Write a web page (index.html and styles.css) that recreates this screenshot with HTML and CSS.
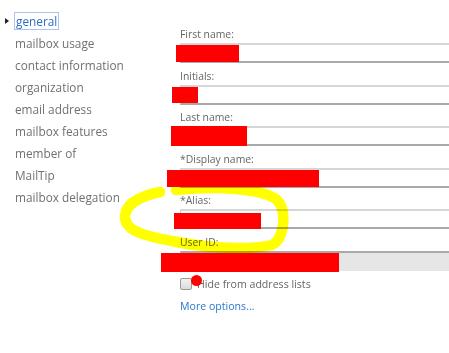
FILE: index.html
```html
<!DOCTYPE html>
<html lang="en">
<head>
  <meta charset="UTF-8" />
  <title>Mailbox - general</title>
  <link rel="stylesheet" href="styles.css">
</head>
<body>
  <div class="page">
    <ul class="nav">
      <li class="current"><span class="arrow"></span><span class="sel">general</span></li>
      <li>mailbox usage</li>
      <li>contact information</li>
      <li>organization</li>
      <li>email address</li>
      <li>mailbox features</li>
      <li>member of</li>
      <li>MailTip</li>
      <li>mailbox delegation</li>
    </ul>

    <div class="form">
      <div class="field">
        <label>First name:</label>
        <div class="box"><span class="redact r1"></span></div>
      </div>
      <div class="field">
        <label>Initials:</label>
        <div class="box"><span class="redact r2"></span></div>
      </div>
      <div class="field">
        <label>Last name:</label>
        <div class="box"><span class="redact r3"></span></div>
      </div>
      <div class="field">
        <label>*Display name:</label>
        <div class="box"><span class="redact r4"></span></div>
      </div>
      <div class="field">
        <label>*Alias:</label>
        <div class="box"><span class="redact r5"></span></div>
      </div>
      <div class="field">
        <label>User ID:</label>
        <div class="box disabled"><span class="redact r6"></span></div>
      </div>

      <div class="check">
        <span class="checkbox"></span>
        <span class="dot"></span>
        <span>Hide from address lists</span>
      </div>
      <a class="more" href="#">More options...</a>
    </div>
  </div>

  <!-- highlighter scribble round the alias field -->
  <svg class="scribble" width="449" height="353" viewBox="0 0 449 353">
    <path d="M176 190 C215 186 263 188 277 200 C287 210 285 238 272 245 C245 251 200 247 172 241 C145 236 124 231 125 216 C126 204 140 196 160 192"
          fill="none" stroke="#ffff00" stroke-width="10.5" stroke-linecap="round" stroke-linejoin="round" />
  </svg>
</body>
</html>
```

FILE: styles.css
```css
body { margin: 0; font-family: "Open Sans", "Noto Sans", sans-serif; background: #fff; overflow: hidden; }
.page { display: flex; }

.nav { list-style: none; margin: 0; padding: 10px 0 0 0; width: 180px; flex: none; }
.nav li { height: 22px; line-height: 22px; font-size: 11.8px; color: #707070; padding-left: 15px; position: relative; white-space: nowrap; }
.nav .current .sel { color: #2f6fbf; border: 1px solid #a9c6ec; padding: 0 1px; margin-left: -1px; line-height: 16px; display: inline-block; }
.nav .arrow { position: absolute; left: 5px; top: 8px; width: 0; height: 0; border-left: 4px solid #222; border-top: 3px solid transparent; border-bottom: 3px solid transparent; }

.form { flex: 1; min-width: 0; padding-top: 27px; }
.field { margin-bottom: 5.6px; }
.field label { display: block; font-size: 10.4px; line-height: 15px; color: #666; margin-bottom: 1px; }
.box { position: relative; height: 16px; border-top: 2px solid #d6d6d6; border-left: 1px solid #d0d0d0; border-bottom: 2px solid #a9a9a9; background: #fff; }
.box.disabled { background: #e6e6e6; border-top-color: #a9a9a9; border-bottom-color: #e6e6e6; }

.redact { position: absolute; background: #ff0000; }
.r1 { left: -5px; top: 0; width: 63px; height: 17px; }
.r2 { left: -9px; top: 0; width: 26px; height: 16px; }
.r3 { left: -10px; top: -2px; width: 76px; height: 20px; }
.r4 { left: -14px; top: 0; width: 152px; height: 17px; }
.r5 { left: -7px; top: 2px; width: 87px; height: 16px; }
.r6 { left: -20px; top: 0; width: 178px; height: 19px; }

.check { display: flex; align-items: center; height: 14px; margin-top: 6px; font-size: 10.6px; color: #666; position: relative; }
.checkbox { width: 10px; height: 10px; border: 1px solid #9a9a9a; border-radius: 2px; background: linear-gradient(#f2f2f2, #dcdcdc); margin-right: 5px; }
.dot { position: absolute; left: 11px; top: -2px; width: 11px; height: 11px; border-radius: 50%; background: #ff0000; }
.more { display: block; margin-top: 8px; font-size: 10.6px; color: #2a7ac8; text-decoration: none; }

.scribble { position: absolute; left: 0; top: 0; pointer-events: none; mix-blend-mode: multiply; }
```
